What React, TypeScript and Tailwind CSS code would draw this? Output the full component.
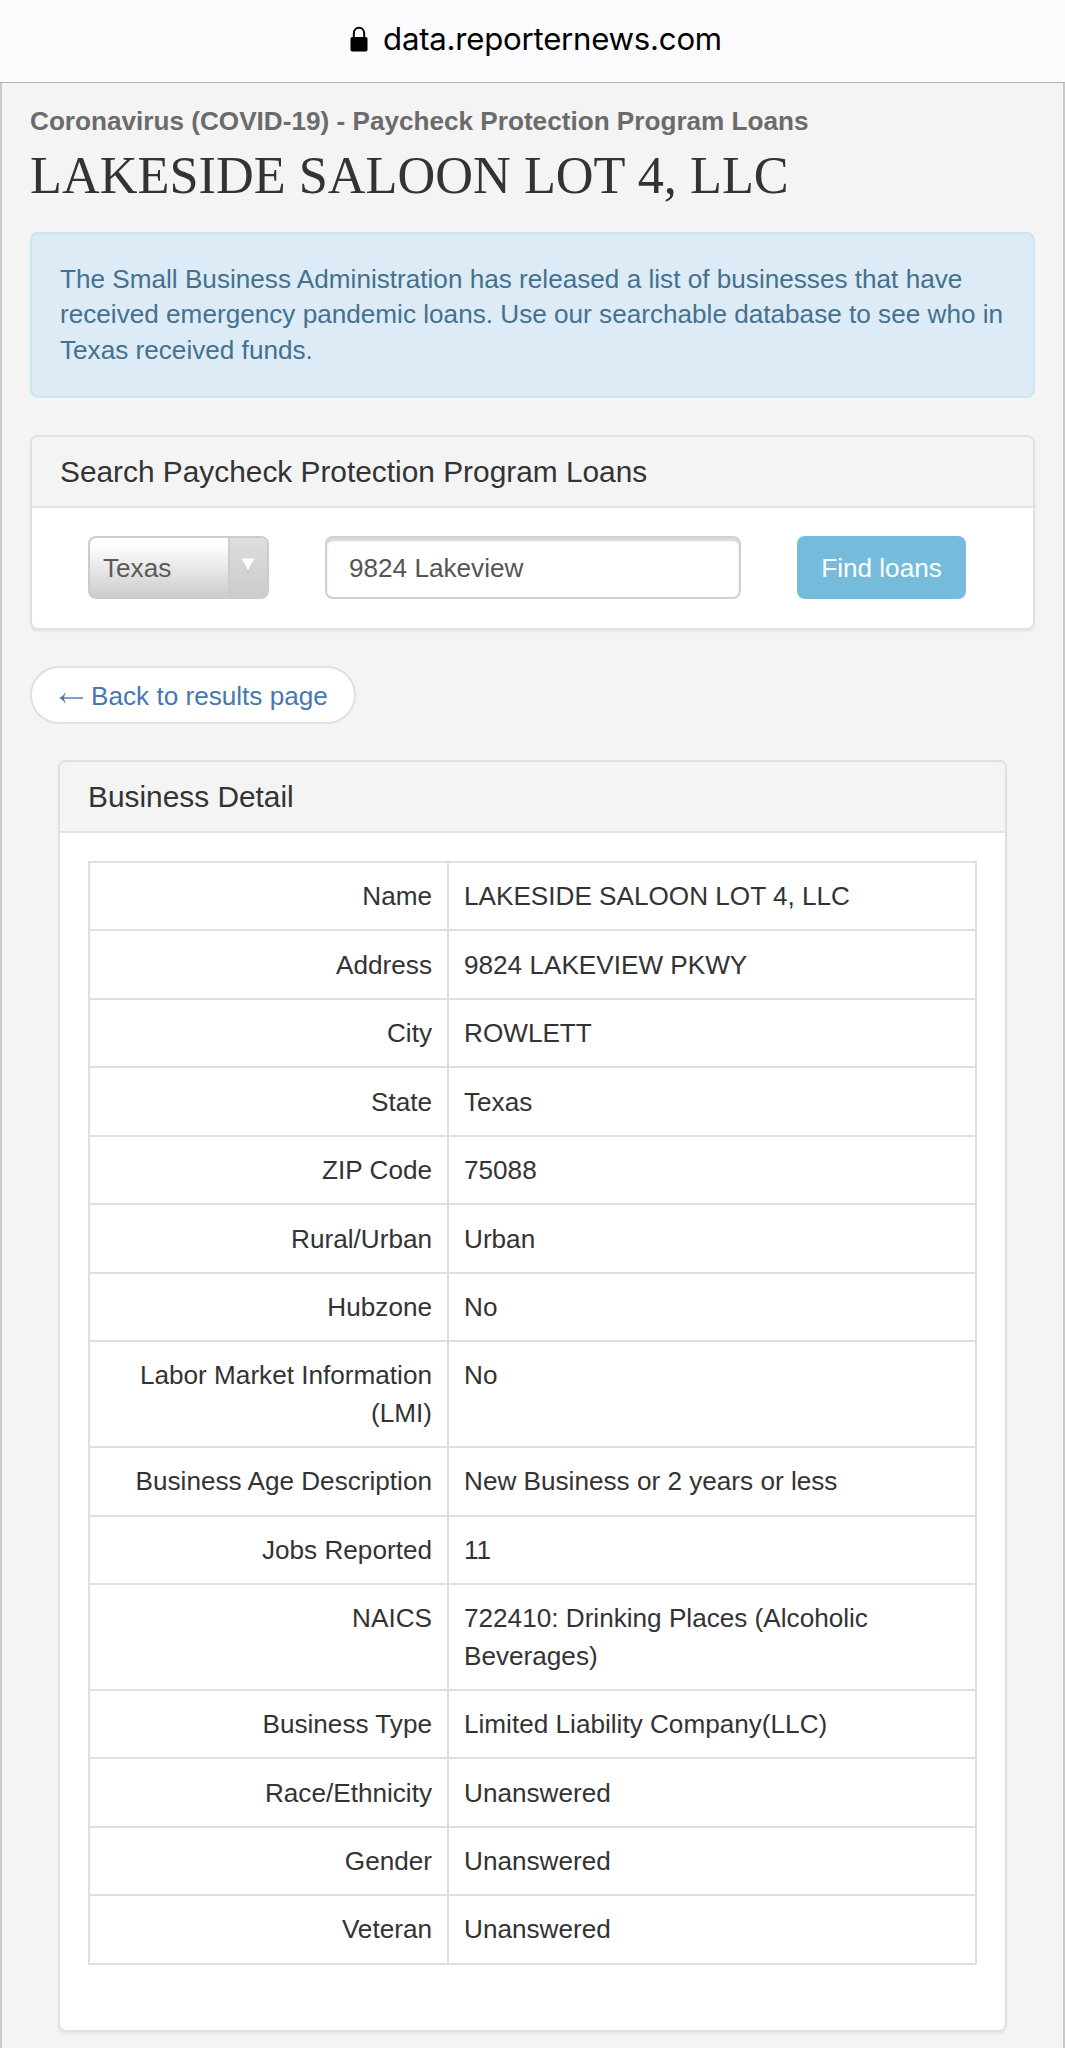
import { ReactNode } from 'react';

const details = [
  { label: 'Name', value: 'LAKESIDE SALOON LOT 4, LLC' },
  { label: 'Address', value: '9824 LAKEVIEW PKWY' },
  { label: 'City', value: 'ROWLETT' },
  { label: 'State', value: 'Texas' },
  { label: 'ZIP Code', value: '75088' },
  { label: 'Rural/Urban', value: 'Urban' },
  { label: 'Hubzone', value: 'No' },
  { label: 'Labor Market Information (LMI)', value: 'No' },
  { label: 'Business Age Description', value: 'New Business or 2 years or less' },
  { label: 'Jobs Reported', value: '11' },
  { label: 'NAICS', value: '722410: Drinking Places (Alcoholic Beverages)' },
  { label: 'Business Type', value: 'Limited Liability Company(LLC)' },
  { label: 'Race/Ethnicity', value: 'Unanswered' },
  { label: 'Gender', value: 'Unanswered' },
  { label: 'Veteran', value: 'Unanswered' },
];

const LockIcon = () => (
  <svg viewBox="0 0 18 26" className="w-[18px] h-[26px]" fill="none">
    <path d="M3.8 12V7.8C3.8 4 6 1.700 9 1.700s5.200 2.300 5.200 6.100V12" stroke="#000" strokeWidth="2" />
    <rect x="0.5" y="11" width="17" height="14.5" rx="1.8" fill="#000" />
  </svg>
);

const Panel = ({ title, children }: { title: string; children: ReactNode }) => (
  <section className="rounded-[8px] border-2 border-[#e0e0e0] bg-white shadow-[0_2px_2px_rgba(0,0,0,0.05)]">
    <h2 className="h-[71px] px-7 border-b-2 border-[#e2e2e2] rounded-t-[6px] bg-[#f4f4f4] text-[29.85px] leading-[69px]">
      {title}
    </h2>
    {children}
  </section>
);

const SearchForm = () => (
  <form className="flex px-14 py-7 text-[26.15px]">
    <div className="flex w-[181px] h-[63px] rounded-[8px] border-2 border-[#ccc] overflow-hidden bg-linear-to-b from-white from-10% to-[#ccc] text-[#5a5a5a]">
      <span className="flex-1 pl-[13px] leading-[60px]">Texas</span>
      <span className="w-[39px] pt-5 pl-[11px] border-l-2 border-[#ccc] bg-linear-to-b from-[#dedede] to-[#cbcbcb]">
        <svg viewBox="0 0 14 14" className="w-3.5 h-3.5">
          <path d="M0.5 1.5h13L7 14z" fill="#c2c2c2" />
          <path d="M0.5 0.5h13L7 12.5z" fill="#fff" />
        </svg>
      </span>
    </div>
    <input
      readOnly
      value="9824 Lakeview"
      className="ml-14 w-[416px] h-[63px] pl-[22px] pt-0.5 rounded-[8px] border-2 border-[#d0d0d0] bg-white text-[#555] outline-none shadow-[inset_0_3px_2px_#d8d8d8]"
    />
    <button
      type="button"
      className="ml-14 mb-px w-[169px] h-[63px] pt-0.5 rounded-[8px] bg-[#75bbdb] text-white"
    >
      Find loans
    </button>
  </form>
);

export default function App() {
  return (
    <div className="h-[2048px] overflow-hidden flex flex-col bg-[#f4f4f4] text-[#333] font-['Liberation_Sans',Arial,sans-serif]">
      <header className="h-[83px] shrink-0 pb-1 pl-[7px] flex items-center justify-center gap-[15px] border-b border-[#b2b2b4] bg-[#fbfbfd] text-black">
        <LockIcon />
        <span className="text-[31.2px] leading-10 tracking-[-0.25px] font-[Inter,sans-serif]">
          data.reporternews.com
        </span>
      </header>

      <main className="flex-1 px-7 border-x-2 border-[#c9c9c9]">
        <p className="pt-[22px] text-[26.15px] leading-[32px] font-bold text-[#6b6b6b]">
          Coronavirus (COVID-19) - Paycheck Protection Program Loans
        </p>
        <h1 className="mt-2 text-[52.3px] leading-[60px] font-['Liberation_Serif',serif]">
          LAKESIDE SALOON LOT 4, LLC
        </h1>

        <div className="mt-[27px] h-[166px] px-7 pt-7 rounded-[8px] border-2 border-[#cae6ef] bg-[#dcebf5] text-[26.15px] leading-[35.4px] text-[#44718f]">
          The Small Business Administration has released a list of businesses that have received
          emergency pandemic loans. Use our searchable database to see who in Texas received funds.
        </div>

        <div className="mt-[37px]">
          <Panel title="Search Paycheck Protection Program Loans">
            <SearchForm />
          </Panel>
        </div>

        <a className="mt-9 flex w-[326px] h-[58px] pl-[26px] items-center rounded-full border-2 border-[#e0e0e0] bg-white text-[26.15px] text-[#4677ae] whitespace-nowrap">
          <svg viewBox="0 0 25 14" className="w-[25px] h-3.5 mr-2 mt-1.5">
            <path d="M5 7h20" stroke="#4677ae" strokeWidth="1.4" />
            <path d="M1 7C4 5.800 5.800 4.200 6.800 1.800L7.500 2.200Q6 5 6 7T7.500 11.800L6.800 12.200C5.800 9.800 4 8.200 1 7z" fill="#4677ae" />
          </svg>
          <span className="pt-1">Back to results page</span>
        </a>

        <div className="mt-9 mx-7">
          <Panel title="Business Detail">
            <dl className="mt-7 mx-7 mb-[65px] border-x-2 border-b-2 border-[#dfdfdf] text-[26.15px] leading-[37.3px]">
              {details.map(({ label, value }) => (
                <div key={label} className="flex border-t-2 border-[#dfdfdf]">
                  <dt className="w-[359px] pt-[15.1px] pb-[14.1px] pl-3.5 pr-[15px] border-r-2 border-[#dfdfdf] text-right">
                    {label}
                  </dt>
                  <dd className="flex-1 pt-[15.1px] pb-[14.1px] pl-[15px] pr-3.5">{value}</dd>
                </div>
              ))}
            </dl>
          </Panel>
        </div>
      </main>
    </div>
  );
}
